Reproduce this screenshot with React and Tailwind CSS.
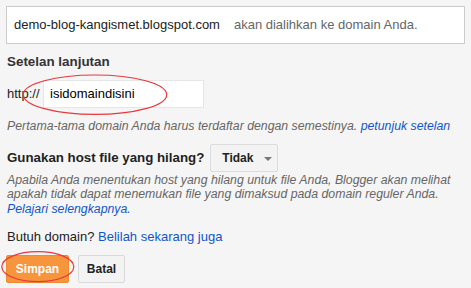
export default function App() {
  return (
    <div className="w-[471px] h-[288px] bg-[#f5f5f5] overflow-hidden relative" style={{ fontFamily: '"Liberation Sans", Arial, sans-serif' }}>
      <div className="pt-[6px] px-[6px]">
        <div className="h-[38px] border border-[#cccccc] bg-white flex items-center pl-[7px] text-[13px]">
          <span className="text-[#222222]">demo-blog-kangismet.blogspot.com</span>
          <span className="text-[#666666] ml-[14px]">akan dialihkan ke domain Anda.</span>
        </div>
      </div>
      <div className="px-[7px]">
        <div className="mt-[10px] text-[13.4px] font-bold text-[#333333] leading-[16px]">Setelan lanjutan</div>
        <div className="mt-[10px] flex items-center text-[13px] text-[#222222]">
          <span className="w-[36px]">http://</span>
          <div className="w-[161px] h-[28px] bg-white border border-[#e6e6e6] flex items-center pl-[6px] text-black">isidomaindisini</div>
        </div>
        <div className="mt-[11px] text-[12.3px] italic text-[#666666] leading-[15px] whitespace-nowrap">
          Pertama-tama domain Anda harus terdaftar dengan semestinya. <span className="text-[#1155cc]">petunjuk setelan</span>
        </div>
        <div className="mt-[10px] flex items-center h-[28px]">
          <span className="text-[13.3px] font-bold text-[#222222]">Gunakan host file yang hilang?</span>
          <div className="ml-[6px] w-[68px] h-[28px] border border-[#dcdcdc] rounded-[2px] bg-[#f3f3f3] flex items-center pl-[11px] text-[12px] font-bold text-[#222222]">
            <span>Tidak</span>
            <span className="ml-[11px] mt-[1px] w-0 h-0 border-l-[4px] border-r-[4px] border-t-[4px] border-l-transparent border-r-transparent border-t-[#777777]"></span>
          </div>
        </div>
        <div className="mt-[0.5px] text-[12.3px] italic text-[#666666] leading-[14.7px]">
          Apabila Anda menentukan host yang hilang untuk file Anda, Blogger akan melihat apakah tidak dapat menemukan file yang dimaksud pada domain reguler Anda. <span className="text-[#1155cc]">Pelajari selengkapnya.</span>
        </div>
        <div className="mt-[12px] text-[13px] text-[#222222] leading-[16px]">
          Butuh domain? <span className="text-[#1155cc]">Belilah sekarang juga</span>
        </div>
        <div className="mt-[10px] flex gap-[9px] -ml-[1px]">
          <div className="w-[63px] h-[28px] rounded-[2px] bg-[#f6953c] border border-[#ee8a30] flex items-center justify-center text-[12px] font-bold text-white">Simpan</div>
          <div className="w-[47px] h-[28px] rounded-[2px] bg-[#f3f3f3] border border-[#d9d9d9] flex items-center justify-center text-[12px] font-bold text-[#222222]">Batal</div>
        </div>
      </div>
      <svg className="absolute left-0 top-0 pointer-events-none" width="471" height="288">
        <ellipse cx="95" cy="94.7" rx="71.7" ry="19.7" fill="none" stroke="#e8383d" strokeWidth="1.2" />
        <ellipse cx="37.8" cy="266.7" rx="36" ry="15" fill="none" stroke="#e8383d" strokeWidth="1.2" />
      </svg>
    </div>
  );
}
